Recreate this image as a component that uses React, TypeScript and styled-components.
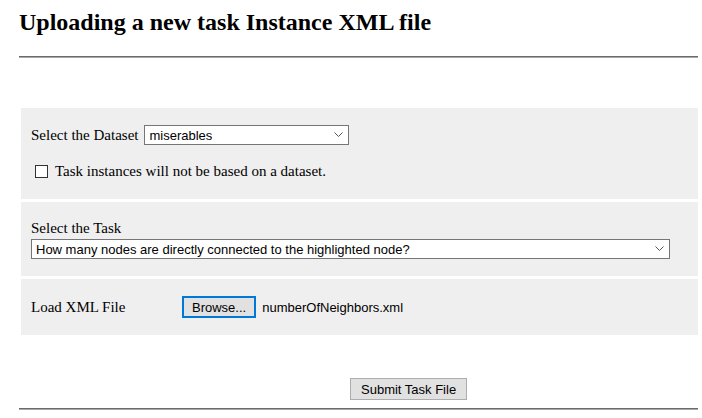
import styled, { createGlobalStyle } from 'styled-components';

const GlobalStyle = createGlobalStyle`
  body {
    margin: 0;
    background: #ffffff;
    color: #000000;
    font-family: "Liberation Serif", "Times New Roman", serif;
  }
`;

const Page = styled.div`
  padding: 0 4px 0 19px;
`;

const Title = styled.h2`
  margin: 0;
  padding-top: 8px;
  font-size: 24px;
  font-weight: bold;
  line-height: 28px;
`;

const Rule = styled.hr`
  margin: 0;
  height: 0;
  border: none;
  border-top: 1px solid #6a6a6a;
  border-bottom: 1px solid #a8a8a8;
`;

const TopRule = styled(Rule)`
  margin-top: 20px;
`;

const Sections = styled.div`
  display: flex;
  flex-direction: column;
  gap: 3px;
  margin: 50px 0 0 2px;
`;

const Section = styled.div<{ $top?: number; $bottom?: number }>`
  background: #efefef;
  padding: ${p => p.$top ?? 17}px 10px ${p => p.$bottom ?? 18}px;
  font-size: 15px;
  display: flex;
  flex-direction: column;
`;

const InlineRow = styled.div`
  display: flex;
  align-items: center;
  gap: 6px;
  height: 20px;
`;

const CheckRow = styled.label`
  display: flex;
  align-items: center;
  gap: 7px;
  margin-top: 16px;
  padding-left: 4px;
  height: 20px;
`;

const Box = styled.input`
  appearance: none;
  margin: 0;
  width: 13px;
  height: 13px;
  border: 1px solid #333333;
  background: #ffffff;
  border-radius: 0;
`;

const SelectWrap = styled.div<{ $width: number }>`
  position: relative;
  width: ${p => p.$width}px;
  height: 20px;
`;

const Select = styled.select`
  appearance: none;
  width: 100%;
  height: 100%;
  margin: 0;
  padding: 0 20px 0 4px;
  border: 1px solid #767676;
  border-radius: 0;
  background: #ffffff;
  color: #000000;
  font-family: "Liberation Sans", Arial, sans-serif;
  font-size: 13px;
`;

const Chevron = styled.svg`
  position: absolute;
  right: 6px;
  top: 7px;
  pointer-events: none;
`;

const TaskLabel = styled.div`
  line-height: 17px;
  margin-bottom: 2px;
`;

const FileRow = styled.div`
  display: flex;
  align-items: center;
  height: 22px;
`;

const FileLabel = styled.span`
  width: 151px;
`;

const Button = styled.button<{ $focused?: boolean }>`
  height: 22px;
  margin: 0;
  padding: 0 ${p => (p.$focused ? 8 : 10)}px;
  background: #e1e1e1;
  border: ${p => (p.$focused ? '2px solid #0078d7' : '1px solid #adadad')};
  border-radius: 0;
  color: #000000;
  font-family: "Liberation Sans", Arial, sans-serif;
  font-size: 13px;
`;

const FileName = styled.span`
  margin-left: 6px;
  font-family: "Liberation Sans", Arial, sans-serif;
  font-size: 13px;
`;

const SubmitRow = styled.div`
  display: flex;
  padding: 43px 0 8px 331px;
`;

const ChevronIcon = () => (
  <Chevron width="9" height="6" viewBox="0 0 9 6">
    <path d="M0.5 0.5 L4.5 4.5 L8.5 0.5" fill="none" stroke="#555555" strokeWidth="1" />
  </Chevron>
);

export default function App() {
  return (
    <>
      <GlobalStyle />
      <Page>
        <Title>Uploading a new task Instance XML file</Title>
        <TopRule />
        <Sections>
          <Section $bottom={18}>
            <InlineRow>
              <span>Select the Dataset</span>
              <SelectWrap $width={205}>
                <Select defaultValue="miserables">
                  <option value="miserables">miserables</option>
                </Select>
                <ChevronIcon />
              </SelectWrap>
            </InlineRow>
            <CheckRow>
              <Box type="checkbox" />
              <span>Task instances will not be based on a dataset.</span>
            </CheckRow>
          </Section>
          <Section $top={18} $bottom={17}>
            <TaskLabel>Select the Task</TaskLabel>
            <SelectWrap $width={639}>
              <Select defaultValue="neighbors">
                <option value="neighbors">How many nodes are directly connected to the highlighted node?</option>
              </Select>
              <ChevronIcon />
            </SelectWrap>
          </Section>
          <Section $top={17} $bottom={17}>
            <FileRow>
              <FileLabel>Load XML File</FileLabel>
              <Button $focused>Browse...</Button>
              <FileName>numberOfNeighbors.xml</FileName>
            </FileRow>
          </Section>
        </Sections>
        <SubmitRow>
          <Button>Submit Task File</Button>
        </SubmitRow>
        <Rule />
      </Page>
    </>
  );
}
